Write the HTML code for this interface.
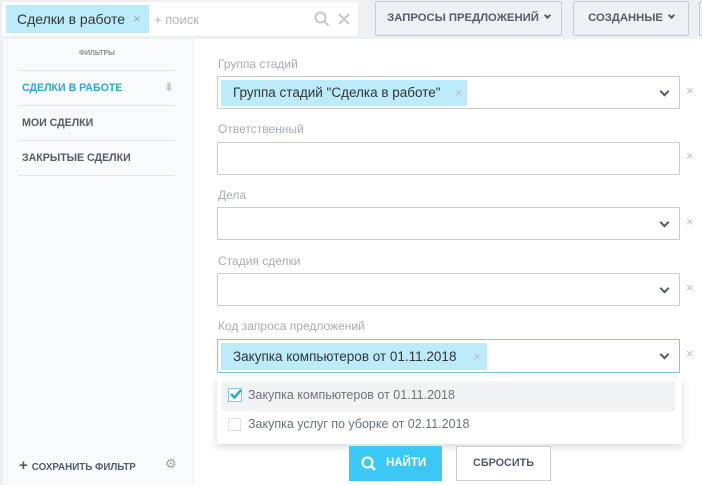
<!DOCTYPE html>
<html><head><meta charset="utf-8"><style>
*{box-sizing:border-box;margin:0;padding:0}
body{width:702px;height:485px;overflow:hidden;background:#eef1f3;font-family:"Liberation Sans","Noto Sans CJK SC",sans-serif;position:relative}
.a{position:absolute}
.search{left:2px;top:2px;width:356px;height:34px;background:#fff;border-radius:2px}
.tag{background:#bcecfb;color:#333;font-size:13.5px;line-height:28px}
.btn{border:1px solid #c6cdd3;background:#eef1f3;color:#535c69;font-size:11.3px;font-weight:bold;height:35px;line-height:33px;text-align:center;border-radius:2px}
.side{left:3px;top:39px;width:191px;height:446px;background:#f8fafb;border-right:1px solid #e8ebee}
.main{left:194px;top:39px;width:508px;height:446px;background:#fff}
.lbl{color:#a8adb4;font-size:12px}
.inp{border:1px solid #c6cdd3;background:#fff;border-radius:1px}
.x{color:#b9bec4;font-size:13px}
.item{left:19px;width:156px;font-size:10.6px;font-weight:bold;color:#535c69;border-top:1px solid #e3e6e9;height:35px;line-height:35px;padding-left:0}
.chev{width:7px;height:7px;border-right:2px solid #535c69;border-bottom:2px solid #535c69;transform:rotate(45deg)}
.bc{display:inline-block;width:5px;height:5px;border-right:2px solid #535c69;border-bottom:2px solid #535c69;transform:rotate(45deg);margin:0 0 3px 6px}
</style></head><body>
<div class="a search">
 <div class="a tag" style="left:4px;top:3px;width:143px;height:28px;padding-left:11px;font-size:14px">Сделки в работе<span class="a x" style="left:127px;top:0;color:#9aa">×</span></div>
 <div class="a" style="left:152px;top:10px;font-size:13px;color:#b0b5bb">+ поиск</div>
 <svg class="a" style="left:312px;top:9px" width="16" height="16"><circle cx="6.5" cy="6.5" r="5" fill="none" stroke="#c4c8cc" stroke-width="2"/><path d="M10 10l4.5 4.5" stroke="#c4c8cc" stroke-width="2.2"/></svg>
 <svg class="a" style="left:335px;top:10px" width="14" height="14"><path d="M2 2l10 10M12 2L2 12" stroke="#c4c8cc" stroke-width="2"/></svg>
</div>
<div class="a btn" style="left:375px;top:1px;width:187px">ЗАПРОСЫ ПРЕДЛОЖЕНИЙ<span class="bc"></span></div>
<div class="a btn" style="left:573px;top:1px;width:116px">СОЗДАННЫЕ<span class="bc"></span></div>
<div class="a btn" style="left:699px;top:1px;width:10px"></div>

<div class="a side"></div>
<div class="a" style="left:0;top:39px;width:3px;height:446px;background:#eef1f3"></div>
<div class="a" style="left:79px;top:50px;font-size:7px;font-weight:bold;color:#8a9199">ФИЛЬТРЫ</div>
<div class="a item" style="top:70px;color:#2fa8d1;left:19px;padding-left:3px">СДЕЛКИ В РАБОТЕ<span class="a" style="left:145px;top:0;color:#c8ccd0;font-size:10px">⬇</span></div>
<div class="a item" style="top:105px;padding-left:3px">МОИ СДЕЛКИ</div>
<div class="a item" style="top:140px;padding-left:3px;border-bottom:1px solid #e3e6e9;height:36px">ЗАКРЫТЫЕ СДЕЛКИ</div>
<div class="a" style="left:19px;top:457px;font-size:9.8px;font-weight:bold;color:#535c69"><span style="font-size:15px;margin-right:4px">+</span>СОХРАНИТЬ ФИЛЬТР</div>
<div class="a" style="left:165px;top:456px;font-size:13px;color:#9aa0a6">⚙</div>

<div class="a main"></div>
<div class="a lbl" style="left:218px;top:57px">Группа стадий</div>
<div class="a inp" style="left:217px;top:76px;width:463px;height:33px"><div class="a tag" style="left:3px;top:3px;width:246px;height:26px;line-height:26px;padding-left:12px">Группа стадий "Сделка в работе"<span class="a x" style="left:234px;top:0">×</span></div><div class="a chev" style="left:443px;top:11px"></div></div>
<div class="a x" style="left:686px;top:83px">×</div>
<div class="a lbl" style="left:218px;top:122px">Ответственный</div>
<div class="a inp" style="left:217px;top:142px;width:463px;height:33px"></div>
<div class="a x" style="left:686px;top:148px">×</div>
<div class="a lbl" style="left:218px;top:188px">Дела</div>
<div class="a inp" style="left:217px;top:207px;width:463px;height:33px"><div class="a chev" style="left:443px;top:11px"></div></div>
<div class="a x" style="left:686px;top:214px">×</div>
<div class="a lbl" style="left:218px;top:254px">Стадия сделки</div>
<div class="a inp" style="left:217px;top:273px;width:463px;height:33px"><div class="a chev" style="left:443px;top:11px"></div></div>
<div class="a x" style="left:686px;top:280px">×</div>
<div class="a lbl" style="left:218px;top:319px">Код запроса предложений</div>
<div class="a inp" style="left:217px;top:339px;width:463px;height:34px;border-color:#7ec6d8"><div class="a tag" style="left:3px;top:3px;width:266px;height:27px;line-height:27px;padding-left:12px">Закупка компьютеров от 01.11.2018<span class="a x" style="left:252px;top:0">×</span></div><div class="a chev" style="left:443px;top:11px"></div></div>
<div class="a x" style="left:686px;top:346px">×</div>
<div class="a" style="left:217px;top:377px;width:465px;height:67px;background:#fff;box-shadow:0 3px 8px rgba(0,0,0,.15)">
 <div class="a" style="left:5px;top:4px;width:453px;height:30px;background:#f1f3f5"></div>
 <div class="a" style="left:11px;top:11px;width:14px;height:14px;border:1px solid #8bc6dd;background:#fff"><svg class="a" style="left:0;top:-2px" width="14" height="14"><path d="M2 7l3.5 3.5L12 3" stroke="#2fa8d1" stroke-width="2.5" fill="none"/></svg></div>
 <div class="a" style="left:31px;top:11px;font-size:12.5px;color:#6a737c">Закупка компьютеров от 01.11.2018</div>
 <div class="a" style="left:11px;top:41px;width:13px;height:13px;border:1px solid #dfe3e6"></div>
 <div class="a" style="left:31px;top:40px;font-size:12.5px;color:#6a737c">Закупка услуг по уборке от 02.11.2018</div>
</div>
<div class="a" style="left:349px;top:446px;width:93px;height:35px;background:#3bc8f5;color:#fff;font-size:11.5px;font-weight:bold;line-height:35px;padding-left:37px"><svg class="a" style="left:12px;top:10px" width="16" height="16"><circle cx="6.5" cy="6.5" r="5" fill="none" stroke="#fff" stroke-width="2.2"/><path d="M10 10l4 4" stroke="#fff" stroke-width="2.5"/></svg>НАЙТИ</div>
<div class="a" style="left:456px;top:446px;width:95px;height:35px;border:1px solid #c6cdd3;background:#fff;color:#535c69;font-size:10.8px;font-weight:bold;line-height:33px;text-align:center">СБРОСИТЬ</div>
</body></html>
